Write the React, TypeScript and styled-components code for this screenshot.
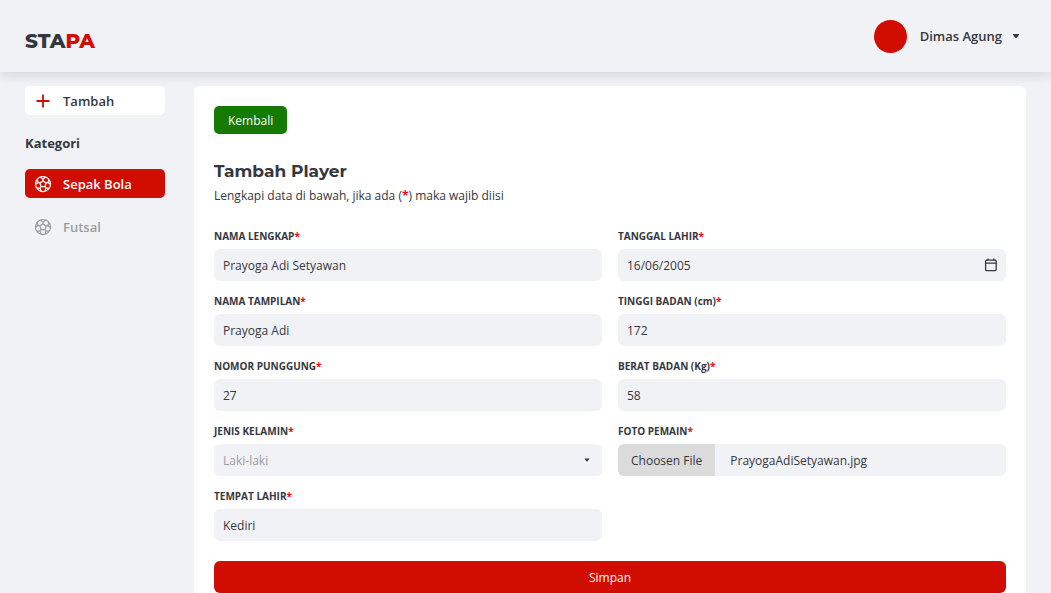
import React, { useState } from 'react';
import styled, { createGlobalStyle } from 'styled-components';
import { PiSoccerBall } from 'react-icons/pi';

const color = {
  red: '#d00d00',
  green: '#147a04',
  ink: '#353740',
  muted: '#9b9ca1',
  surface: '#f1f2f6',
};

const GlobalStyle = createGlobalStyle`
  * { box-sizing: border-box; }
  body {
    margin: 0;
    background: ${color.surface};
    color: ${color.ink};
    font-family: 'Open Sans', sans-serif;
    font-weight: 500;
  }
  button, input, select { font: inherit; color: inherit; border: 0; }
  button { cursor: pointer; }
`;

const Header = styled.header`
  display: flex;
  align-items: center;
  justify-content: space-between;
  height: 72px;
  padding: 0 31px 0 25px;
  box-shadow: 0 2px 12px rgba(30, 32, 45, 0.16);
`;

const Logo = styled.a`
  padding-top: 10px;
  font: 800 20px/24px Montserrat, Inter, sans-serif;
  color: ${color.ink};
  text-decoration: none;
  span { color: ${color.red}; }
`;

const Account = styled.button`
  display: flex;
  align-items: center;
  gap: 10px;
  padding: 0;
  background: none;
  font-size: 13px;
  font-weight: 600;
`;

const Avatar = styled.span`
  width: 33px;
  height: 33px;
  margin-right: 3px;
  border-radius: 50%;
  background: ${color.red};
`;

const Page = styled.div`
  display: grid;
  grid-template-columns: 140px minmax(0, 1fr);
  gap: 29px;
  padding: 14px 25px 0;
`;

const Sidebar = styled.nav`
  display: flex;
  flex-direction: column;
`;

const NavTitle = styled.h2`
  margin: 18px 0 16px;
  font-size: 13px;
  line-height: 20px;
  font-weight: 700;
`;

const NavItem = styled.a<{ $tone: 'plain' | 'active' | 'muted' }>`
  display: flex;
  align-items: center;
  gap: 10px;
  height: 29px;
  margin-bottom: 14px;
  padding: 0 8px;
  border-radius: 5px;
  font-size: 13px;
  line-height: 18px;
  font-weight: 600;
  text-decoration: none;
  background: ${p => (p.$tone === 'plain' ? '#fff' : p.$tone === 'active' ? color.red : 'transparent')};
  color: ${p => (p.$tone === 'plain' ? color.ink : p.$tone === 'active' ? '#fff' : color.muted)};
`;

const AddItem = styled(NavItem)`
  margin-bottom: 0;
  svg { color: ${color.red}; }
`;

const Card = styled.main`
  padding: 20px 20px 0;
  border-radius: 6px 6px 0 0;
  background: #fff;
`;

const BackButton = styled.button`
  height: 28px;
  padding: 0 14px;
  border-radius: 5px;
  background: ${color.green};
  color: #fff;
  font-size: 12px;
`;

const Title = styled.h1`
  margin: 26px 0 5px;
  font: 700 17px/22px Montserrat, Inter, sans-serif;
`;

const Intro = styled.p`
  margin: 0 0 23px;
  font-size: 12px;
  line-height: 18px;
`;

const Required = styled.span`
  color: #e60f0f;
  font-weight: 700;
`;

const FormGrid = styled.div`
  display: grid;
  grid-template-columns: repeat(2, minmax(0, 1fr));
  column-gap: 16px;
`;

const Column = styled.div`
  display: flex;
  flex-direction: column;
  gap: 12px;
`;

const Field = styled.div`
  display: flex;
  flex-direction: column;
  gap: 5px;
`;

const Label = styled.label`
  font-size: 10px;
  line-height: 16px;
  font-weight: 700;
`;

const Control = styled.div`
  display: flex;
  align-items: center;
  height: 32px;
  overflow: hidden;
  border-radius: 6px;
  background: ${color.surface};
  font-size: 12px;
`;

const Input = styled.input`
  flex: 1;
  min-width: 0;
  height: 100%;
  padding: 0 9px;
  background: none;
`;

const Select = styled.select`
  flex: 1;
  height: 100%;
  padding: 0 9px;
  appearance: none;
  background: none;
  color: ${color.muted};
`;

const IconButton = styled.button`
  display: flex;
  padding: 0 8px;
  background: none;
`;

const SelectArrow = styled.span`
  display: flex;
  padding-right: 12px;
  pointer-events: none;
`;

const HiddenFile = styled.input`
  display: none;
`;

const FileButton = styled.button`
  height: 100%;
  padding: 0 13px;
  background: #dbdbdc;
`;

const FileName = styled.span`
  padding-left: 15px;
`;

const SaveButton = styled.button`
  width: 100%;
  height: 32px;
  margin-top: 20px;
  border-radius: 6px;
  background: ${color.red};
  color: #fff;
  font-size: 12px;
`;

const Caret = ({ size }: { size: number }) => (
  <svg width={size} height={size} viewBox="0 0 8 8" fill="currentColor" aria-hidden="true">
    <path d="M1.2 2h5.6q.8 0 .3.7L4.6 5.7q-.6.6-1.2 0L.9 2.7Q.4 2 1.2 2z" />
  </svg>
);

const PlusIcon = () => (
  <svg width="20" height="20" viewBox="0 0 20 20" stroke="currentColor" strokeWidth="1.8" fill="none" aria-hidden="true">
    <path d="M10 3.5v13M3.5 10h13" />
  </svg>
);

const CalendarIcon = () => (
  <svg width="14" height="14" viewBox="0 0 14 14" stroke="currentColor" strokeWidth="1.3" fill="none" aria-hidden="true">
    <rect x="1.6" y="2.2" width="10.6" height="10.4" rx="1" />
    <path d="M1.6 5.2h10.6M4 .6v1.8M9.8 .6v1.8" />
  </svg>
);

type TextFieldProps = { id: string; label: string; value: string; children?: React.ReactNode };

const FieldLabel = ({ id, label }: { id: string; label: string }) => (
  <Label htmlFor={id}>{label}<Required>*</Required></Label>
);

const TextField = ({ id, label, value, children }: TextFieldProps) => (
  <Field>
    <FieldLabel id={id} label={label} />
    <Control><Input id={id} defaultValue={value} />{children}</Control>
  </Field>
);

export default function App() {
  const [fileName, setFileName] = useState('PrayogaAdiSetyawan.jpg');
  const fileRef = React.useRef<HTMLInputElement>(null);

  return (
    <>
      <GlobalStyle />
      <Header>
        <Logo href="#">STA<span>PA</span></Logo>
        <Account type="button">
          <Avatar />
          Dimas Agung
          <Caret size={8} />
        </Account>
      </Header>
      <Page>
        <Sidebar>
          <AddItem href="#tambah" $tone="plain"><PlusIcon />Tambah</AddItem>
          <NavTitle>Kategori</NavTitle>
          <NavItem href="#sepak-bola" $tone="active"><PiSoccerBall size={20} />Sepak Bola</NavItem>
          <NavItem href="#futsal" $tone="muted"><PiSoccerBall size={20} />Futsal</NavItem>
        </Sidebar>
        <Card>
          <BackButton type="button">Kembali</BackButton>
          <Title>Tambah Player</Title>
          <Intro>Lengkapi data di bawah, jika ada (<Required>*</Required>) maka wajib diisi</Intro>
          <form onSubmit={e => e.preventDefault()}>
            <FormGrid>
              <Column>
                <TextField id="nama" label="NAMA LENGKAP" value="Prayoga Adi Setyawan" />
                <TextField id="tampilan" label="NAMA TAMPILAN" value="Prayoga Adi" />
                <TextField id="nomor" label="NOMOR PUNGGUNG" value="27" />
                <Field>
                  <FieldLabel id="kelamin" label="JENIS KELAMIN" />
                  <Control>
                    <Select id="kelamin"><option>Laki-laki</option><option>Perempuan</option></Select>
                    <SelectArrow><Caret size={6} /></SelectArrow>
                  </Control>
                </Field>
                <TextField id="tempat" label="TEMPAT LAHIR" value="Kediri" />
              </Column>
              <Column>
                <TextField id="tanggal" label="TANGGAL LAHIR" value="16/06/2005">
                  <IconButton type="button" aria-label="Pilih tanggal"><CalendarIcon /></IconButton>
                </TextField>
                <TextField id="tinggi" label="TINGGI BADAN (cm)" value="172" />
                <TextField id="berat" label="BERAT BADAN (Kg)" value="58" />
                <Field>
                  <FieldLabel id="foto" label="FOTO PEMAIN" />
                  <Control>
                    <HiddenFile
                      id="foto"
                      type="file"
                      ref={fileRef}
                      onChange={e => setFileName(e.target.files?.[0]?.name ?? fileName)}
                    />
                    <FileButton type="button" onClick={() => fileRef.current?.click()}>Choosen File</FileButton>
                    <FileName>{fileName}</FileName>
                  </Control>
                </Field>
              </Column>
            </FormGrid>
            <SaveButton type="submit">Simpan</SaveButton>
          </form>
        </Card>
      </Page>
    </>
  );
}
